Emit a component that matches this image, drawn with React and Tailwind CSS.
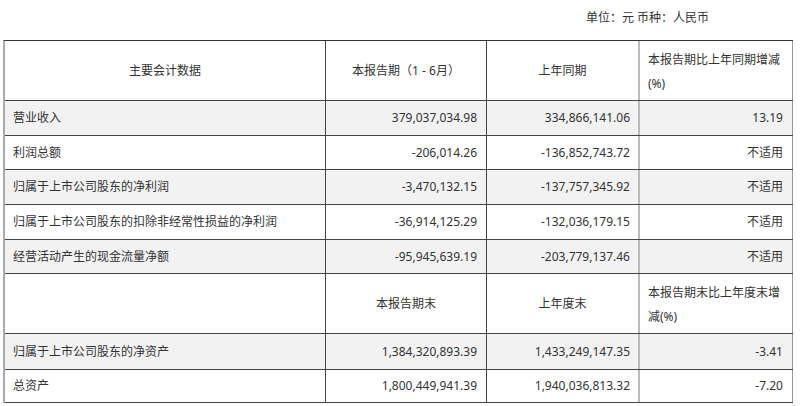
import React from "react";

const C1 = "flex items-center pl-[8px] border-r border-[#444]";
const C2 = "flex items-center justify-end pr-[9px] border-r border-[#444]";
const C3 = "flex items-center justify-end pr-[8px] border-r-2 border-[#bbb]";
const C4 = "flex items-center justify-end pr-[9px] border-r border-[#999]";

function Row({ h, gray, cells }) {
  return (
    <div
      className={
        "grid grid-cols-[321px_161px_153px_153px] border-b border-[#444] " +
        h +
        (gray ? " bg-[#f2f2f2]" : " bg-white")
      }
    >
      <div className={C1}>{cells[0]}</div>
      <div className={C2}>{cells[1]}</div>
      <div className={C3}>{cells[2]}</div>
      <div className={C4}>{cells[3]}</div>
    </div>
  );
}

function Header({ h, cells }) {
  return (
    <div
      className={
        "grid grid-cols-[321px_161px_153px_153px] border-b border-[#444] bg-white " + h
      }
    >
      <div className="flex items-center justify-center border-r border-[#444]">{cells[0]}</div>
      <div className="flex items-center justify-center border-r border-[#444]">{cells[1]}</div>
      <div className="flex items-center justify-center border-r-2 border-[#bbb]">{cells[2]}</div>
      <div className="flex items-center pl-[8px] pr-[9px] border-r border-[#999] leading-[24px] pt-[2px]">
        {cells[3]}
      </div>
    </div>
  );
}

export default function App() {
  return (
    <div
      className="w-[800px] h-[406px] bg-white text-[#333] text-[12px] overflow-hidden"
      style={{ fontFamily: '"Noto Sans", "Noto Sans CJK SC", sans-serif' }}
    >
      <div className="pt-[6px] leading-[24px] text-right pr-[91px]">单位：元 币种：人民币</div>
      <div className="mt-[10px] ml-[3px] w-[790px] border-l-2 border-t border-l-[#aaa] border-t-[#333]">
        <Header
          h="h-[60px]"
          cells={["主要会计数据", "本报告期（1 - 6月）", "上年同期", "本报告期比上年同期增减(%)"]}
        />
        <Row h="h-[35px]" gray cells={["营业收入", "379,037,034.98", "334,866,141.06", "13.19"]} />
        <Row h="h-[34px]" cells={["利润总额", "-206,014.26", "-136,852,743.72", "不适用"]} />
        <Row
          h="h-[35px]"
          gray
          cells={["归属于上市公司股东的净利润", "-3,470,132.15", "-137,757,345.92", "不适用"]}
        />
        <Row
          h="h-[35px]"
          cells={["归属于上市公司股东的扣除非经常性损益的净利润", "-36,914,125.29", "-132,036,179.15", "不适用"]}
        />
        <Row
          h="h-[34px]"
          gray
          cells={["经营活动产生的现金流量净额", "-95,945,639.19", "-203,779,137.46", "不适用"]}
        />
        <Header h="h-[60px]" cells={["", "本报告期末", "上年度末", "本报告期末比上年度末增减(%)"]} />
        <Row
          h="h-[36px]"
          gray
          cells={["归属于上市公司股东的净资产", "1,384,320,893.39", "1,433,249,147.35", "-3.41"]}
        />
        <Row h="h-[33px]" cells={["总资产", "1,800,449,941.39", "1,940,036,813.32", "-7.20"]} />
      </div>
    </div>
  );
}
